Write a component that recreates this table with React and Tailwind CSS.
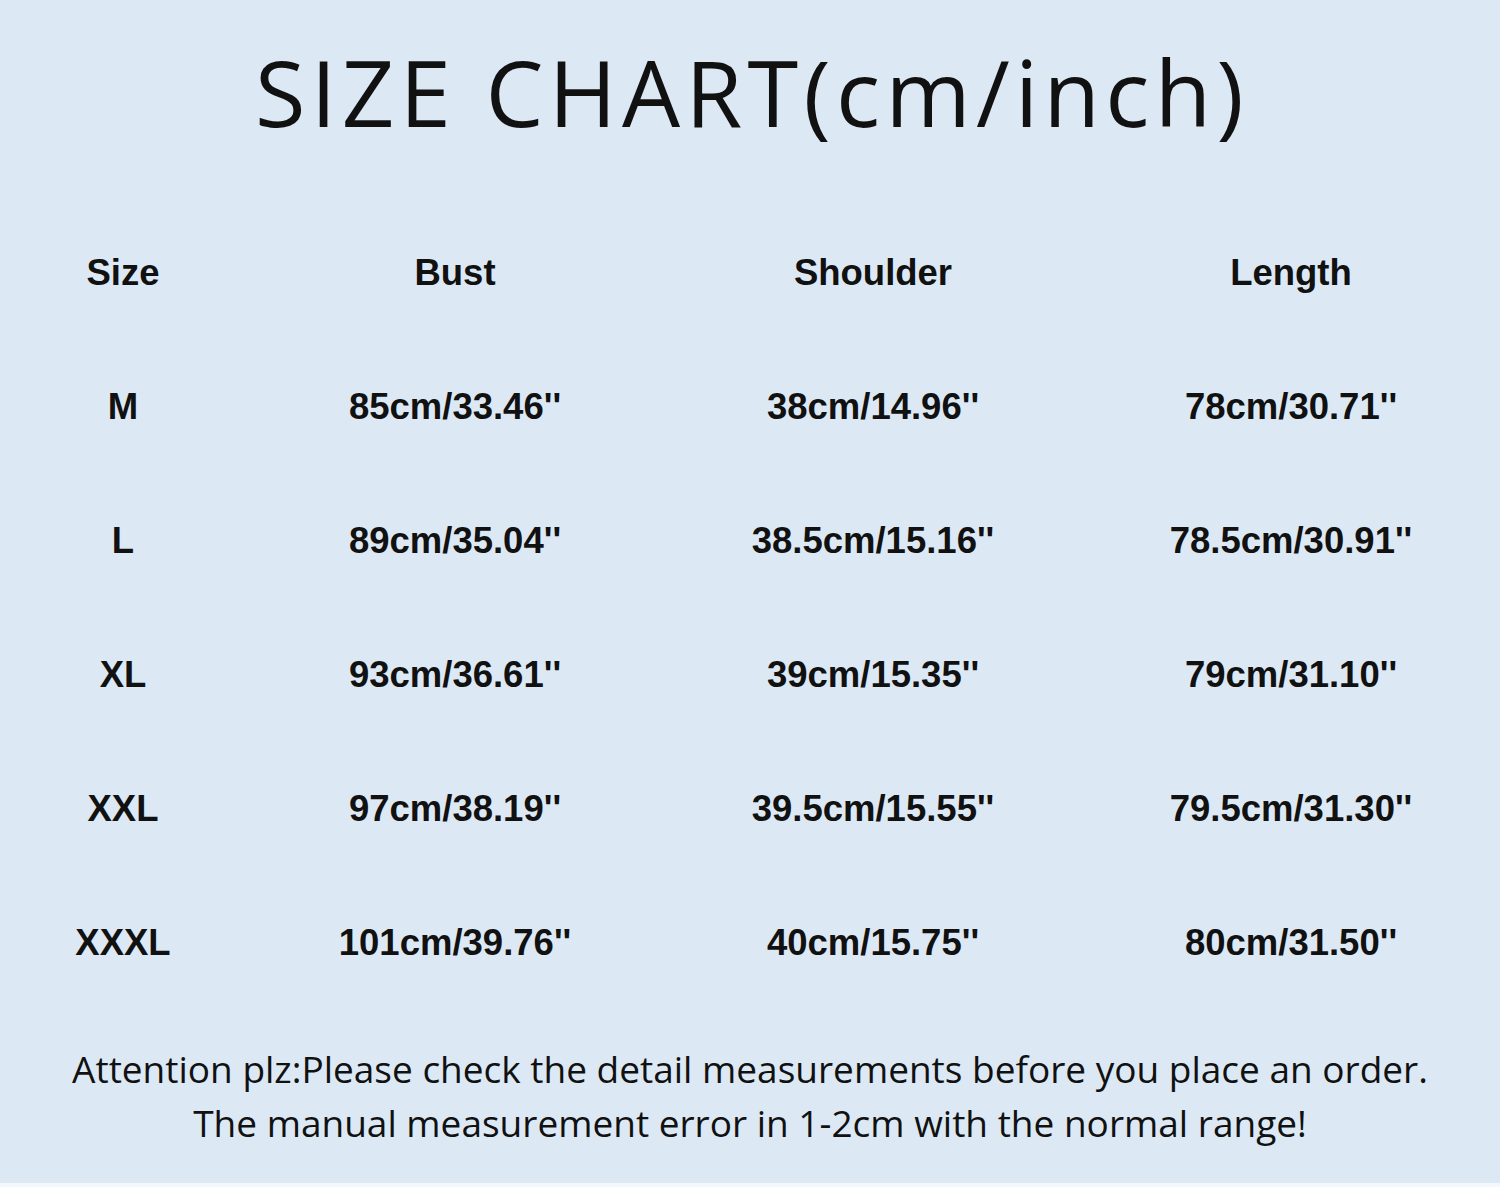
import React from "react";

const rows = [
  ["M", "85cm/33.46''", "38cm/14.96''", "78cm/30.71''"],
  ["L", "89cm/35.04''", "38.5cm/15.16''", "78.5cm/30.91''"],
  ["XL", "93cm/36.61''", "39cm/15.35''", "79cm/31.10''"],
  ["XXL", "97cm/38.19''", "39.5cm/15.55''", "79.5cm/31.30''"],
  ["XXXL", "101cm/39.76''", "40cm/15.75''", "80cm/31.50''"],
];

export default function App() {
  return (
    <div className="w-[1500px] h-[1187px] bg-[#dce9f5] border-b-4 border-[#f4f8fc] text-[#111111] overflow-hidden flex flex-col">
      <div className="h-[206px] flex justify-center pt-[32px] pl-[4px]">
        <h1 className="text-[92px] leading-[120px] tracking-[0.058em] font-normal [font-family:'Open_Sans',sans-serif]">
          SIZE CHART(cm/inch)
        </h1>
      </div>
      <div className="grid grid-cols-[246px_1fr_1fr_1fr] auto-rows-[134px] font-bold text-[36.5px] [font-family:'Liberation_Sans',sans-serif]">
        {["Size", "Bust", "Shoulder", "Length"].map((h) => (
          <div key={h} className="flex items-center justify-center">{h}</div>
        ))}
        {rows.map((r) =>
          r.map((c, i) => (
            <div key={r[0] + i} className="flex items-center justify-center">{c}</div>
          ))
        )}
      </div>
      <div className="flex flex-col items-center pt-[32px] text-[37px] leading-[54px] [font-family:'Open_Sans',sans-serif]">
        <p>Attention plz:Please check the detail measurements before you place an order.</p>
        <p>The manual measurement error in 1-2cm with the normal range!</p>
      </div>
    </div>
  );
}
